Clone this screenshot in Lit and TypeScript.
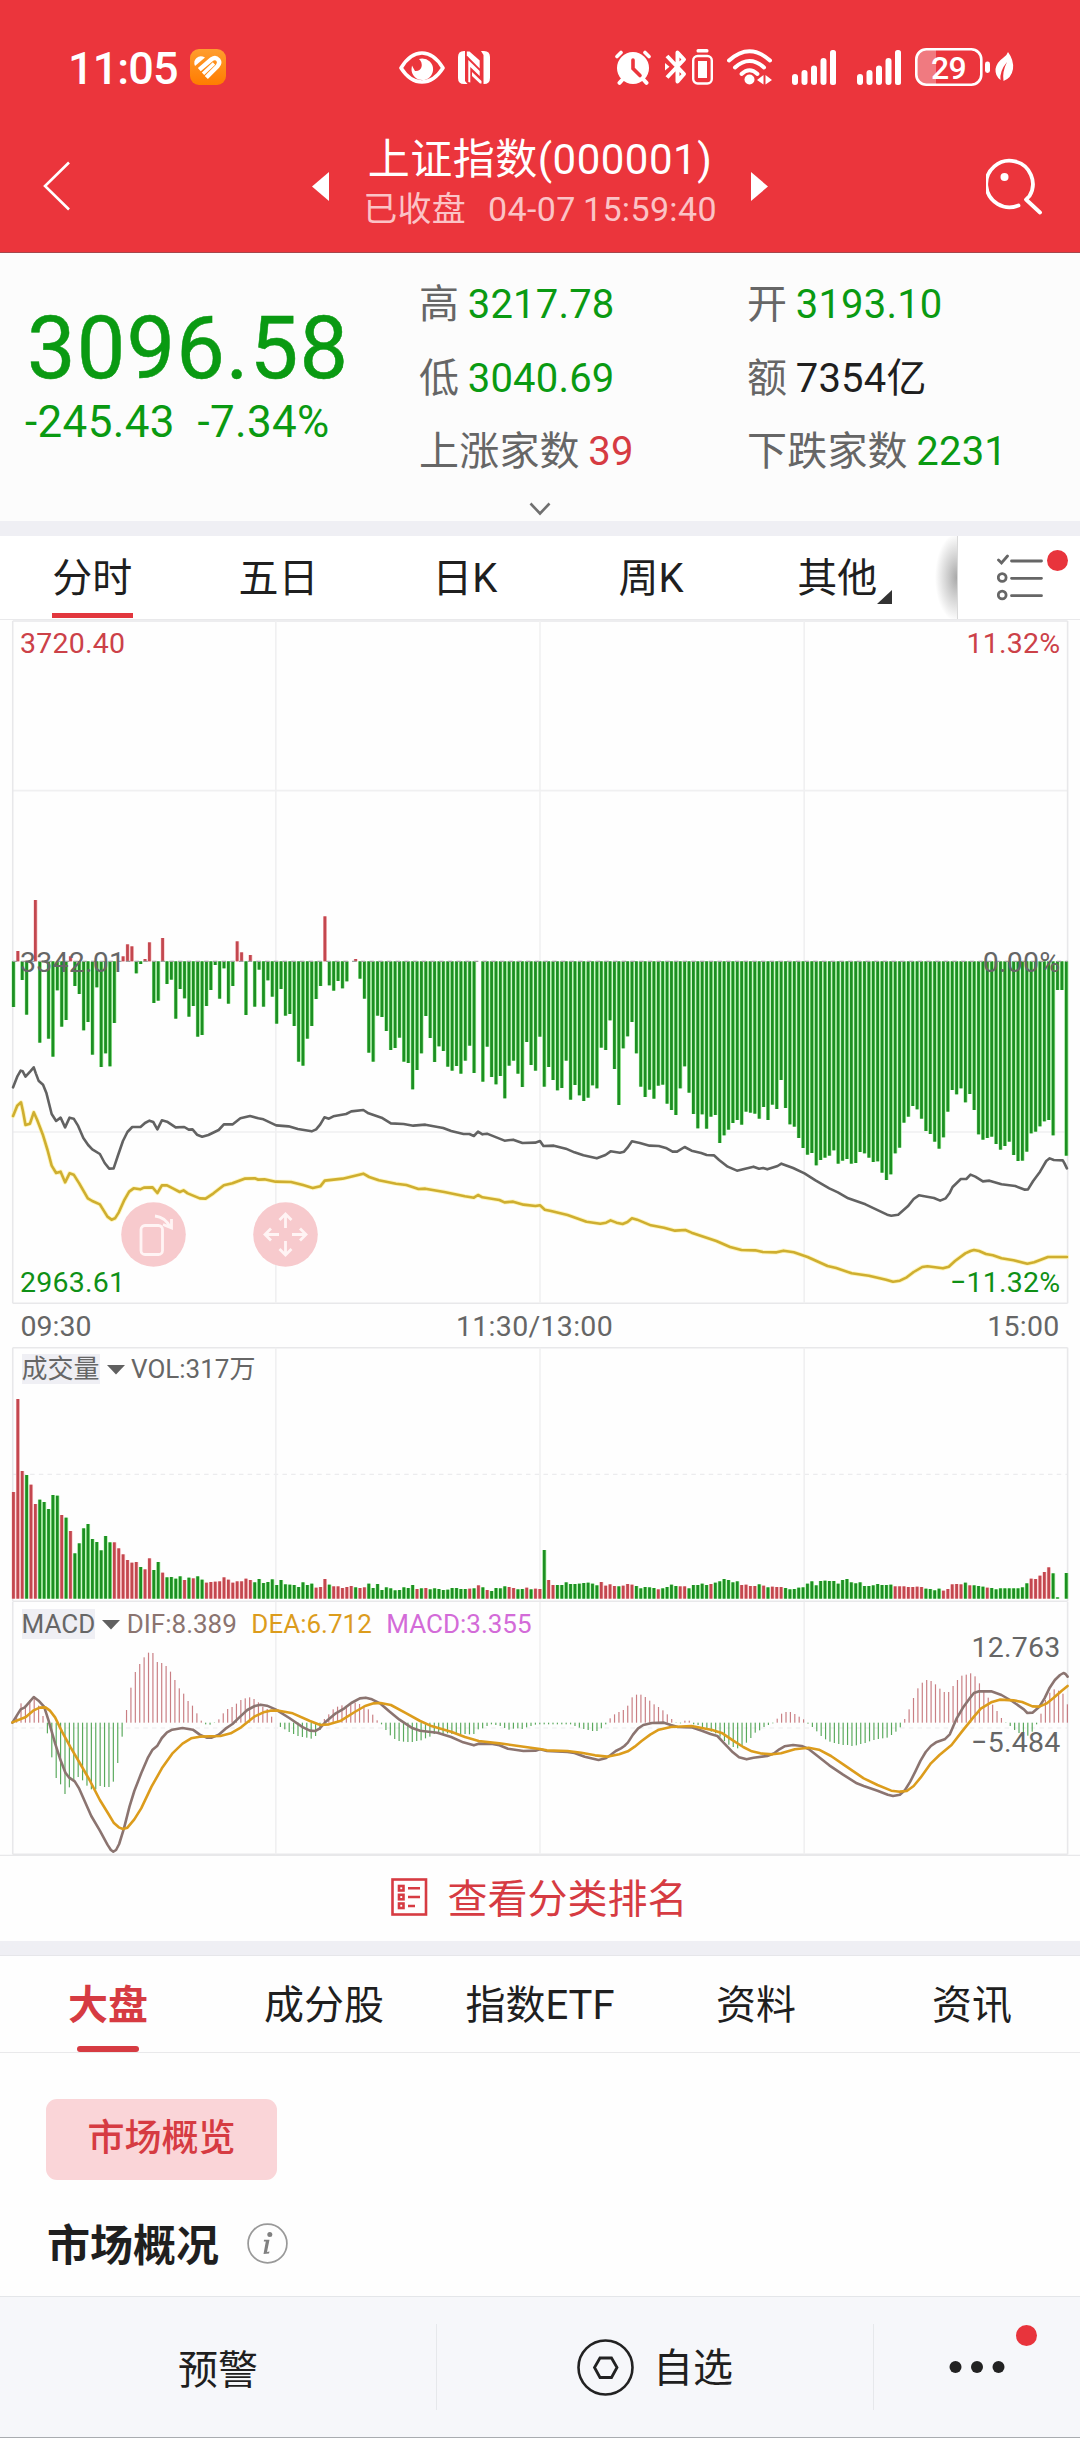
import { LitElement, html, svg, css } from "lit";
import { customElement, property } from "lit/decorators.js";

/* ---------- chart series (drawing units: 3136 wide, 3 per px high) ---------- */

const GAP = -1;

// Minute momentum bars around a zero line at 304; smaller values rise above it.
const MOMENTUM = [
  441,273,360,464,304,120,548,304,536,590,391,500,480,289,378,402,511,486,584,382,
  621,580,619,489,304,289,253,259,340,312,297,247,429,422,234,372,359,476,387,415,
  470,438,530,525,438,390,315,416,325,431,378,244,277,465,285,440,329,440,361,410,
  491,387,467,462,498,605,617,536,498,417,378,169,376,392,363,385,364,304,297,356,
  416,578,605,467,471,513,570,564,533,605,609,688,630,580,468,534,606,559,573,620,
  632,618,641,602,557,639,304,665,560,651,673,648,715,617,602,641,681,546,615,632,
  530,680,621,660,691,684,602,719,675,706,723,713,676,685,563,570,481,627,735,565,
  529,486,580,680,711,689,716,677,674,731,750,765,685,619,698,762,805,763,806,770,
  765,849,826,809,789,780,794,755,758,761,776,741,780,734,747,660,744,793,800,834,
  864,884,879,916,900,893,887,871,911,902,897,911,909,876,880,893,906,904,938,960,
  943,880,863,788,770,738,748,776,813,822,845,866,832,755,690,703,685,727,702,750,
  823,839,834,830,852,869,858,845,885,903,902,875,820,815,799,784,780,826,390,390,887,
];

// Volume bars: top edge per minute, standing on 926.
const VOLUME = [
  606,327,543,555,584,642,629,636,657,615,617,675,683,723,790,760,715,702,747,756,
  781,738,757,757,775,793,810,818,816,831,838,805,840,816,848,862,861,866,859,870,
  863,865,859,869,878,876,875,874,862,869,878,874,874,866,870,877,867,879,876,868,
  885,870,883,884,885,891,877,885,881,893,891,867,884,889,889,894,891,888,892,894,
  892,881,894,882,900,892,895,901,900,892,894,885,897,895,894,898,895,897,900,899,
  894,894,897,897,896,895,886,892,900,903,894,895,889,891,894,898,897,893,898,896,
  897,780,870,885,885,885,877,882,882,881,879,878,881,886,876,887,883,888,889,887,
  882,884,888,895,891,892,894,898,895,891,884,888,889,889,895,885,885,881,885,882,
  878,874,867,870,877,874,885,884,888,888,883,887,892,890,891,891,894,898,897,893,
  892,881,874,886,873,872,873,873,881,870,867,877,880,877,888,888,886,882,885,885,
  884,889,889,889,891,891,890,891,896,897,901,896,902,897,883,882,883,878,886,886,
  888,890,893,894,898,895,895,895,895,895,892,880,866,867,857,846,832,850,922,GAP,849,
];
const VOLUME_UP = new Set([
  0,1,2,4,5,11,13,23,24,25,26,27,28,30,31,34,39,41,44,45,46,47,48,49,50,51,52,53,54,
  69,70,71,73,74,75,76,77,79,80,92,94,104,106,108,113,114,117,119,120,122,123,134,135,
  136,137,139,140,141,147,152,153,159,166,167,168,169,171,173,174,175,201,202,203,204,
  205,206,207,212,213,214,215,216,218,222,232,233,234,235,236,
]);

// MACD histogram around a zero line at 398.
const HISTOGRAM = [
  398,376,340,345,330,318,347,378,430,502,564,583,612,592,570,561,571,587,598,598,
  588,591,591,575,519,440,360,293,246,222,202,188,189,216,219,228,245,270,295,311,
  333,347,370,392,403,404,399,388,370,357,351,341,330,325,322,327,337,350,357,380,
  398,411,418,426,432,438,441,443,446,438,420,387,373,358,350,346,347,340,338,342,
  347,358,374,391,403,420,436,447,453,455,456,456,453,451,445,440,432,430,432,430,
  432,432,433,432,433,432,418,415,408,403,405,408,414,419,416,415,417,412,408,404,
  403,403,403,403,403,403,403,403,408,413,417,420,423,423,415,403,385,373,366,360,
  347,322,314,314,321,332,343,351,361,373,387,399,400,392,392,403,405,415,420,425,
  430,440,453,464,471,475,468,458,444,428,421,411,405,400,386,371,366,366,372,380,
  388,401,411,424,438,448,455,459,462,465,465,468,466,462,459,454,450,447,445,443,
  435,425,412,387,358,324,295,278,270,273,283,296,306,306,288,270,257,254,250,259,
  280,305,323,344,363,384,399,408,420,429,438,437,425,403,371,330,308,298,302,311,343,
];

const AVERAGE_LINE =
  "38,682 50,650 60,632 66,634 74,650 88,634 98,622 104,640 112,662 125,674 135,700 150,762 163,783 176,773 189,802 202,773 214,776 226,796 242,834 256,855 268,868 290,882 304,909 317,926 330,925 342,888 357,843 370,816 384,801 408,801 421,789 434,782 445,786 457,808 470,781 485,785 510,802 535,801 548,809 559,808 572,824 587,830 605,825 635,810 650,793 676,793 698,775 726,768 750,775 765,778 802,796 838,799 865,807 905,814 918,808 930,793 942,772 955,776 968,769 1005,762 1020,754 1055,750 1070,760 1108,773 1135,790 1172,792 1200,797 1235,794 1287,804 1310,813 1346,822 1363,822 1376,828 1388,815 1401,823 1414,821 1465,842 1490,839 1517,849 1554,848 1568,843 1578,858 1608,857 1643,866 1668,877 1694,886 1733,895 1758,885 1773,874 1800,878 1812,875 1822,863 1835,844 1858,849 1886,857 1913,858 1936,865 1953,875 1966,875 1988,861 2008,872 2036,879 2052,885 2073,886 2088,900 2113,920 2140,932 2188,920 2204,926 2216,924 2228,928 2258,918 2269,911 2303,924 2336,940 2368,961 2408,985 2433,997 2463,1015 2513,1033 2576,1064 2588,1067 2608,1064 2636,1039 2653,1017 2668,1006 2712,1014 2730,1022 2746,1015 2758,998 2766,981 2790,957 2806,957 2818,944 2832,950 2854,964 2873,962 2908,973 2948,978 2976,989 2985,988 3000,963 3020,935 3038,903 3048,895 3060,900 3086,901 3091,910 3098,925";
const PRICE_LINE =
  "38,768 50,737 61,727 67,755 74,795 87,791 98,757 108,780 125,826 138,870 150,917 163,939 176,935 189,967 202,940 214,944 230,970 255,1015 268,1023 290,1033 312,1070 324,1079 334,1075 345,1057 360,1022 375,995 388,985 407,988 418,983 443,982 457,999 470,976 485,976 502,985 522,996 533,991 545,1000 580,1015 597,1016 620,1000 650,976 675,970 710,956 740,955 750,959 768,958 800,965 845,966 880,975 908,984 930,979 943,962 995,956 1055,941 1072,951 1100,961 1150,971 1180,975 1215,987 1235,986 1290,996 1350,1009 1376,1013 1388,1005 1401,1012 1450,1020 1465,1027 1490,1025 1520,1034 1555,1038 1568,1036 1582,1049 1600,1053 1648,1065 1703,1085 1743,1091 1760,1088 1773,1081 1790,1088 1808,1092 1822,1086 1835,1075 1850,1079 1890,1096 1928,1103 1960,1112 1990,1110 2008,1118 2080,1143 2120,1161 2153,1170 2193,1171 2215,1176 2255,1177 2275,1172 2305,1177 2345,1191 2403,1218 2428,1224 2473,1240 2523,1247 2573,1259 2593,1265 2613,1262 2633,1252 2653,1236 2678,1221 2693,1219 2738,1225 2755,1220 2773,1203 2803,1180 2818,1173 2828,1170 2843,1173 2863,1182 2883,1186 2908,1195 2943,1201 2983,1211 3003,1207 3043,1191 3098,1191";
const DIF_LINE =
  "36,398 60,358 72,352 98,321 112,332 128,350 140,388 160,460 176,511 190,548 200,562 217,574 230,596 265,678 290,722 312,764 322,780 329,785 337,780 346,762 360,715 376,650 390,603 410,550 430,502 443,479 457,467 470,444 485,427 500,419 530,414 560,419 580,434 600,443 615,443 635,434 655,416 675,402 695,382 718,360 740,348 757,344 775,347 800,358 840,384 880,412 900,422 915,423 928,416 945,396 975,370 1000,355 1020,339 1045,325 1062,323 1080,328 1105,341 1130,364 1160,389 1195,413 1220,422 1270,428 1310,441 1345,457 1376,466 1390,461 1430,462 1450,466 1475,476 1520,483 1555,482 1568,478 1588,483 1648,486 1668,489 1698,500 1738,510 1758,505 1773,495 1788,483 1803,475 1813,468 1823,458 1838,434 1853,415 1868,405 1893,399 1928,398 1948,405 1968,411 2008,412 2038,422 2063,432 2083,438 2103,460 2128,487 2146,502 2168,508 2188,503 2228,498 2248,490 2263,478 2278,469 2303,465 2328,468 2348,477 2373,497 2408,526 2448,554 2488,580 2508,588 2548,602 2578,614 2593,618 2613,614 2628,600 2643,575 2658,544 2673,512 2688,486 2703,468 2718,457 2743,448 2758,433 2778,385 2798,350 2818,322 2828,309 2843,304 2878,304 2908,315 2938,333 2973,358 2983,369 2998,368 3018,350 3033,325 3048,293 3063,270 3078,255 3088,249 3094,252 3100,260";
const DEA_LINE =
  "36,397 75,381 98,361 115,353 132,352 145,362 160,382 180,425 205,472 235,525 260,570 290,630 315,672 330,698 345,712 357,717 370,713 390,688 410,655 440,590 470,535 500,491 530,461 555,445 580,440 640,438 670,430 700,412 740,379 765,367 785,362 810,362 850,370 900,393 930,405 955,403 990,392 1030,366 1060,348 1085,340 1105,339 1135,345 1180,370 1220,393 1250,407 1310,425 1350,441 1390,453 1450,460 1500,467 1568,477 1588,481 1648,483 1688,488 1728,496 1763,500 1798,493 1823,484 1843,470 1863,453 1888,434 1913,419 1948,411 2008,408 2038,414 2068,420 2098,430 2128,451 2158,471 2183,484 2208,490 2243,493 2268,490 2308,478 2348,473 2378,479 2413,498 2458,530 2508,565 2548,585 2588,602 2613,605 2633,603 2653,588 2673,563 2703,520 2728,495 2763,465 2793,425 2828,380 2848,356 2878,337 2903,329 2943,331 2968,336 2998,349 3018,350 3038,341 3058,325 3083,302 3100,288";

/* ---------- chart panel ---------- */

const FRAME_X = [37, 801, 1568, 2335, 3100];

@customElement("chart-panel")
class ChartPanel extends LitElement {
  @property() kind = "price";

  static styles = css`
    :host { display: block; position: relative; }
    svg { display: block; width: 1080px; }
    .price { height: 684px; }
    .volume { height: 255px; }
    .macd { height: 254px; }
    .grid { stroke: #f0f0f1; stroke-width: 1.6; fill: none; vector-effect: non-scaling-stroke; }
    .edge { stroke: #e8e8ea; }
    .dash { stroke-dasharray: 4.5 4.2; stroke-width: 1.2; stroke: #ececee; }
    .zero { stroke: #a0a0a0; stroke-width: 1.2; stroke-dasharray: 4.5 4.2; fill: none; vector-effect: non-scaling-stroke; }
    .line { fill: none; stroke-width: 2.6; stroke-linejoin: round; stroke-linecap: round; vector-effect: non-scaling-stroke; }
    .avg { stroke: #626262; }
    .last { stroke: #cfae30; }
    .dif { stroke: #8b7470; }
    .dea { stroke: #dc9c1c; }
    .glow { stroke: #fff3a0; stroke-width: 4.4; opacity: .7; }
    .g-core { fill: #1c8f22; }
    .g-halo { fill: #a6f0a0; }
    .r-core { fill: #c3474f; }
    .r-halo { fill: #f9c6c8; }
    .up { fill: #b8565c; opacity: .76; }
    .down { fill: #2f9433; opacity: .8; }
  `;

  private bar(i: number, y: number, h: number, up: boolean) {
    const x = 38.6 + i * 12.738;
    return svg`<rect class=${up ? "r-halo" : "g-halo"} x=${x - 5} y=${y} width="11.5" height=${h}/>
      <rect class=${up ? "r-core" : "g-core"} x=${x - 3.6} y=${y} width="8" height=${h}/>`;
  }

  private verticals(top: number, bottom: number) {
    return FRAME_X.map((x, i) => svg`<path class="grid ${i % 4 ? "" : "edge"}" d="M${x} ${top}V${bottom}"/>`);
  }

  private price() {
    return html`<svg class="price" viewBox="0 -720 3136 2052" preserveAspectRatio="none">
      <path class="grid edge" d="M37 -717H3100M37 1330H3100"/>
      <path class="grid" d="M37 -208H3100M37 816H3100"/>
      ${this.verticals(-717, 1330)}
      ${MOMENTUM.map((v, i) => v === 304 ? null : v < 304 ? this.bar(i, v, 304 - v, true) : this.bar(i, 304, v - 304, false))}
      <path class="zero" d="M37 304H3100"/>
      <polyline class="line avg" points=${AVERAGE_LINE}/>
      <polyline class="line glow" points=${PRICE_LINE}/>
      <polyline class="line last" points=${PRICE_LINE}/>
    </svg>`;
  }

  private volume() {
    return html`<svg class="volume" viewBox="0 171 3136 765" preserveAspectRatio="none">
      <path class="grid edge" d="M37 173H3100M37 934H3100"/>
      <path class="grid dash" d="M37 553H3100"/>
      ${this.verticals(173, 934)}
      ${VOLUME.map((v, i) => v === GAP ? null : this.bar(i, v, 926 - v, VOLUME_UP.has(i)))}
    </svg>`;
  }

  private macd() {
    return html`<svg class="macd" viewBox="0 36 3136 762" preserveAspectRatio="none">
      <path class="grid edge" d="M37 793H3100"/>
      <path class="grid edge" d="M0 797H3136"/>
      <path class="grid dash" d="M37 414H3100"/>
      ${this.verticals(36, 793)}
      ${HISTOGRAM.map((v, i) => {
        const x = 33.8 + i * 12.766;
        return v < 398
          ? svg`<rect class="up" x=${x} y=${v} width="3.4" height=${398 - v}/>`
          : svg`<rect class="down" x=${x} y="398" width="3.4" height=${v - 398}/>`;
      })}
      <polyline class="line dif" points=${DIF_LINE}/>
      <polyline class="line dea" points=${DEA_LINE}/>
    </svg>`;
  }

  render() {
    const body = this.kind === "price" ? this.price() : this.kind === "volume" ? this.volume() : this.macd();
    return html`${body}<slot></slot>`;
  }
}

/* ---------- status bar ---------- */

const signal = html`<svg width="44" height="35" viewBox="0 0 44 35" fill="#fff">
  <rect x="0" y="24" width="6" height="11" rx="3"/><rect x="9.5" y="20" width="6" height="15" rx="3"/>
  <rect x="19" y="15.5" width="6" height="19.5" rx="3"/><rect x="28.5" y="8" width="6" height="27" rx="3"/>
  <rect x="38" y="0" width="6" height="35" rx="2.5"/></svg>`;

@customElement("status-bar")
class StatusBar extends LitElement {
  static styles = css`
    :host { display: flex; height: 134px; box-sizing: border-box; color: #fff; padding-left: 68px; align-items: center; font-family: Roboto, sans-serif; }
    svg { display: block; flex: none; }
    .time { font-size: 45px; font-weight: 500; width: 121.500px; line-height: 1; letter-spacing: -.9px; white-space: nowrap; padding-top: 2px; }
    .mid { display: flex; gap: 13px; margin-left: 173.500px; }
    .right { display: flex; align-items: center; margin-left: 124.500px; }
    .bt { margin-left: 14px; } .bud { margin-left: 4px; } .wifi { margin-left: 14px; }
    .sig { margin-left: 20.500px; } .batt { margin-left: 14px; } .leaf { margin-left: 5px; }
    text { font: 500 32px Roboto, sans-serif; letter-spacing: -.6px; }
  `;
  render() {
    return html`
      <div class="time">11:05</div>
      <svg width="36" height="36" viewBox="0 0 36 36">
        <defs><linearGradient id="o" x2="0" y2="1"><stop stop-color="#ff9d2e"/><stop offset="1" stop-color="#ff7c00"/></linearGradient></defs>
        <rect width="36" height="36" rx="9" fill="url(#o)"/>
        <path d="M5 17Q3 12 6.500 9Q10 6 15 8.500Z" fill="#fff"/>
        <path d="M9.300 20.700L21.500 10.300Q25.500 7.500 28.300 10.800Q30.500 14 27.500 17.200L16.300 28.500" fill="none" stroke="#fff" stroke-width="4.400"/>
        <path d="M13 24.800L24 14.500" stroke="#fff" stroke-width="3.400"/>
      </svg>
      <div class="mid">
        <svg width="46" height="33" viewBox="0 0 46 33">
          <path d="M2 17Q11 2 23 2T44 17Q35 31 23 31T2 17Z" fill="none" stroke="#fff" stroke-width="3.600" stroke-linejoin="round"/>
          <path d="M23 7.500A10.800 10.800 0 1 1 12.500 18L13 14.500Q14.500 17.500 16 20Q21 20.500 22.500 16Q23.500 11 20 8Z" fill="#fff"/>
        </svg>
        <svg width="32" height="33" viewBox="0 0 32 33">
          <path d="M6 0H7V30L9.500 33H6Q0 33 0 27V6Q0 0 6 0ZM23 0H26Q32 0 32 6V27Q32 33 26 33H25.500V4Z" fill="#fff"/>
          <path d="M8.800 .5H11.500L21.700 9.500V17.500L8.800 4.500Z" fill="#fff"/>
          <path d="M10.300 9L21.700 20V25L12.300 16V31.500L10.300 31Z" fill="#fff"/>
          <path d="M14 21L23.500 30V32.500H22L14 25Z" fill="#fff"/>
        </svg>
      </div>
      <div class="right">
        <svg width="36" height="35" viewBox="0 0 36 35">
          <circle cx="18" cy="18" r="16" fill="#fff"/>
          <path d="M18 10V18.500L25 25.500" stroke="#eb353c" stroke-width="3.600" fill="none" stroke-linecap="round"/>
          <path d="M2 6.500L6 2.500M34 6.500L30 2.500" stroke="#fff" stroke-width="3.600" stroke-linecap="round"/>
          <path d="M8 29L4.500 32.800M28 29L31.500 32.800" stroke="#fff" stroke-width="4" stroke-linecap="round"/>
        </svg>
        <svg class="bt" width="23" height="36" viewBox="0 0 23 36">
          <path d="M2 7L19 25L12.500 32.500V3.500L19 10.500L2 28.500" fill="none" stroke="#fff" stroke-width="4" stroke-linejoin="round"/>
          <path d="M0 14L4.500 17.800L0 21.500Z" fill="#fff"/>
        </svg>
        <svg class="bud" width="21" height="36" viewBox="0 0 21 36">
          <rect x="4.500" y="0" width="12" height="3.600" rx="1.500" fill="#fff"/>
          <rect x="1.200" y="7" width="18.600" height="27.500" rx="4.500" fill="none" stroke="#fff" stroke-width="2.400"/>
          <rect x="6" y="12" width="9" height="17" fill="#fff"/>
        </svg>
        <svg class="wifi" width="45" height="36" viewBox="0 0 45 36">
          <g fill="none" stroke="#fff" stroke-width="4" stroke-linecap="round"><path d="M2 11.500Q22.500 -7 43 11.500"/><path d="M8 18.500Q22.500 5.500 37 18.500"/><path d="M14.500 25Q22.500 17.500 30.500 25"/></g>
          <circle cx="22.500" cy="30.500" r="5" fill="#fff"/>
          <path d="M30 31L36.500 26V35.500ZM45 31L38.500 26V35.500Z" fill="#fff"/>
        </svg>
        <div class="sig">${signal}</div><div class="sig">${signal}</div>
        <svg class="batt" width="75" height="38" viewBox="0 0 75 38">
          <path d="M11 1.500H21V36.500H11Q2 36.500 2 27V11Q2 1.500 11 1.500Z" fill="#f07a80"/>
          <rect x="1.300" y="1.300" width="65" height="35.400" rx="10" fill="none" stroke="#fff" stroke-width="2.600"/>
          <rect x="70" y="13.500" width="5" height="11.500" rx="2.400" fill="#fff"/>
          <text x="33.500" y="30.500" text-anchor="middle" fill="#fff">29</text>
        </svg>
        <svg class="leaf" width="19" height="30" viewBox="0 0 19 30">
          <path d="M13 0Q19 8 18 17Q16.500 26 8.500 29Q7 20 12 10Q4.500 19 5.500 28Q0 24 .5 17Q2 10 8 6Q12 3.500 13 0Z" fill="#fff"/>
        </svg>
      </div>`;
  }
}

/* ---------- page ---------- */

const QUOTES = [
  ["高", "3217.78", "down"], ["开", "3193.10", "down"],
  ["低", "3040.69", "down"], ["额", "7354亿", "plain"],
  ["上涨家数", "39", "up"], ["下跌家数", "2231", "down"],
];
const PERIODS = ["分时", "五日", "日K", "周K", "其他"];
const SECTIONS = ["大盘", "成分股", "指数ETF", "资料", "资讯"];

@customElement("app-root")
class AppRoot extends LitElement {
  static styles = css`
    :host { display: block; width: 1080px; height: 2438px; overflow: hidden; background: #fefefe; color: #1f1f1f; font-family: Roboto, "Noto Sans CJK SC", sans-serif; }
    * { box-sizing: border-box; }
    svg { display: block; flex: none; }
    .head { height: 253px; background: #eb353c; color: #fff; border-bottom: 1.500px solid #a5474c; }
    .nav { display: grid; grid-template-columns: 300px 480px 300px; height: 104px; }
    .side { display: flex; align-items: center; height: 104px; }
    .back { margin-left: 43px; }
    .prev { margin-left: auto; margin-right: -29px; }
    .next { margin-left: -29px; } .find { margin-left: auto; margin-right: 37px; }
    .title { text-align: center; padding-top: 3px; }
    .name { font-size: 42px; line-height: 46px; letter-spacing: .5px; }
    .when { font-size: 34px; line-height: 52px; color: #fbc3c6; white-space: pre; letter-spacing: .35px; word-spacing: -1.500px; }
    .summary { display: grid; grid-template-columns: 420px 660px; height: 268px; background: #fcfcfc; grid-template-rows: 249px 19px; }
    .down { color: #0a9a12; } .up { color: #d63b42; } .plain { color: #1f1f1f; }
    .now { padding: 53px 0 0 27px; }
    .big { font-size: 86.500px; line-height: 86px; letter-spacing: 1.100px; -webkit-text-stroke: .5px #0a9a12; }
    .delta { font-size: 44px; line-height: 46px; margin: 7px 0 0 -2px; white-space: pre; letter-spacing: .35px; }
    .quotes { display: grid; grid-template-columns: 328px 332px; grid-auto-rows: 73.500px; padding-top: 15px; }
    .quote { font-size: 40px; line-height: 73px; display: flex; gap: 8.500px; color: #666; white-space: nowrap; margin-left: -1px; letter-spacing: .2px; }
    .more { grid-column: 1 / 3; display: flex; justify-content: center; align-items: flex-start; }
    .band { height: 15px; background: #efeff4; }
    .periods { display: flex; height: 84px; background: #fff; border-bottom: 1.500px solid #e9e9eb; }
    .period { width: 186.300px; text-align: center; font-size: 40px; line-height: 85px; position: relative; padding-right: 2px; }
    .period.on::after { content: ""; position: absolute; left: 52px; width: 81px; bottom: 1px; height: 5px; background: #e2373e; }
    .corner { position: absolute; left: 132px; top: 54px; }
    .shade { width: 27px; background: radial-gradient(ellipse 22px 44px at 100% 50%, #a8a8a8, #d0d0d0 45%, #ffffff00 100%); border-right: 1px solid #d9d9d9; }
    .tools { flex: 1; position: relative; }
    .list { margin: 17px 0 0 39px; }
    .dot { position: absolute; width: 21px; height: 21px; border-radius: 50%; background: #e8343c; }
    .tools .dot { left: 88.500px; top: 14px; }
    .tag { position: absolute; font-size: 28.500px; line-height: 34px; color: #666; letter-spacing: .25px; }
    .l { left: 20px; } .r { right: 19.500px; }
    .y1 { top: 6.500px; } .y2 { top: 326px; } .y3 { top: 646px; }
    .up.tag { color: #cc4148; } .down.tag { color: #0f9016; }
    .round { position: absolute; top: 582px; }
    .one { left: 121px; } .two { left: 253px; }
    .axis { height: 43px; padding: 0 20.500px; display: grid; grid-template-columns: 1fr 1fr 1fr; font-size: 28.500px; line-height: 46px; color: #666; }
    .axis span:nth-child(2) { text-align: center; padding-right: 11px; letter-spacing: .3px; } .axis span:nth-child(3) { text-align: right; letter-spacing: .25px; }
    .legend { position: absolute; left: 21.500px; top: 7px; display: flex; align-items: center; font-size: 26px; line-height: 30px; color: #666; white-space: nowrap; }
    .pick { background: #efeff4; }
    .tri { margin: 0 6.500px 0 7px; }
    .dif { color: #8b7470; } .dea { color: #dc9c1c; margin-left: 14.500px; } .mac { color: #d36bd8; margin-left: 14.500px; }
    .y4 { top: 29px; } .y5 { top: 124px; }
    .rank { height: 85px; display: flex; justify-content: center; align-items: center; gap: 20px; color: #d63b42; font-size: 40px; padding: 0 2px 5px 0; }
    .rank svg { margin-top: 1px; }
    .band.two-line { border-bottom: 1.500px solid #e6e6ea; }
    .sections { height: 97px; display: grid; grid-template-columns: repeat(5, 1fr); border-bottom: 1.500px solid #e9e9eb; }
    .section { text-align: center; font-size: 40px; line-height: 99px; position: relative; }
    .section.on { font-weight: 700; color: #d63b42; }
    .section.on::after { content: ""; position: absolute; left: 77px; width: 62px; bottom: 3px; height: 6px; border-radius: 3px; background: #d63b42; }
    .market { height: 243px; padding: 46px; }
    .chip { width: 231px; height: 81px; border-radius: 11px; background: #fad5d8; color: #d63b42; font-size: 37px; line-height: 80px; text-align: center; font-weight: 500; }
    .heading { display: flex; align-items: center; gap: 28px; font-size: 43px; font-weight: 700; line-height: 50px; margin: 41px 0 0 1px; }
    .heading svg { margin-top: -5px; }
    .foot { height: 142px; background: #f6f7fa; border-top: 1.500px solid #e4e6e9; border-bottom: 1.500px solid #a9acb0; display: grid; grid-template-columns: 437px 437px 206px; padding: 27px 0; font-size: 40px; }
    .cell { display: flex; align-items: center; justify-content: center; position: relative; height: 86px; border-right: 1px solid #e6e8eb; gap: 19px; }
    .cell:last-child { border: 0; }
    .cell span { padding-bottom: 4px; }
    .cell span.low { padding-bottom: 1px; }
    .cell .dot { left: 142px; top: 1px; }
  `;

  private caret() {
    return html`<svg class="tri" width="18" height="11" viewBox="0 0 18 11"><path d="M0 1H18L9 10.500Z" fill="#606060"/></svg>`;
  }

  render() {
    return html`
      <header class="head">
        <status-bar></status-bar>
        <div class="nav">
          <div class="side">
            <svg class="back" width="28" height="50" viewBox="0 0 28 50"><path d="M26 1.500L2 25L26 48.500" fill="none" stroke="#fff" stroke-width="2.600"/></svg>
            <svg class="prev" width="17" height="29" viewBox="0 0 17 29"><path d="M17 0V29L0 14.500Z" fill="#fff"/></svg>
          </div>
          <div class="title">
            <div class="name">上证指数(000001)</div>
            <div class="when">已收盘   04-07 15:59:40</div>
          </div>
          <div class="side">
            <svg class="next" width="17" height="29" viewBox="0 0 17 29"><path d="M0 0V29L17 14.500Z" fill="#fff"/></svg>
            <svg class="find" width="57" height="57" viewBox="0 0 57 57"><path d="M32.500 47.500A23.300 23.300 0 1 1 43.500 38L40 41.500L54 54.500" fill="none" stroke="#fff" stroke-width="3.800" stroke-linecap="round" stroke-linejoin="round"/><circle cx="18.500" cy="19" r="4" fill="#fff"/></svg>
          </div>
        </div>
      </header>

      <section class="summary">
        <div class="now down">
          <div class="big">3096.58</div>
          <div class="delta">-245.43  -7.34%</div>
        </div>
        <div class="quotes">
          ${QUOTES.map(([k, v, c]) => html`<div class="quote"><span>${k}</span><span class=${c}>${v}</span></div>`)}
        </div>
        <div class="more"><svg width="22" height="14" viewBox="0 0 22 14"><path d="M1.500 1.500L11 11.500L20.500 1.500" fill="none" stroke="#707070" stroke-width="2.600"/></svg></div>
      </section>
      <div class="band"></div>

      <nav class="periods">
        ${PERIODS.map((p, i) => html`<div class="period ${i ? "" : "on"}">${p}${i === 4 ? html`<svg class="corner" width="15" height="14" viewBox="0 0 15 14"><path d="M15 0V14H0Z" fill="#333"/></svg>` : null}</div>`)}
        <div class="shade"></div>
        <div class="tools">
          <svg class="list" width="46" height="48" viewBox="0 0 46 48" fill="none" stroke="#666" stroke-width="2.800" stroke-linecap="round">
            <path d="M1.500 7L4.500 10L10.500 3M14.500 8H44.500M14.500 25.300H44.500M14.500 42.700H44.500"/>
            <circle cx="5.200" cy="24.500" r="3.900"/><circle cx="5.200" cy="42" r="3.900"/>
          </svg>
          <div class="dot"></div>
        </div>
      </nav>

      <chart-panel kind="price">
        <div class="tag up l y1">3720.40</div><div class="tag up r y1">11.32%</div>
        <div class="tag l y2">3342.01</div><div class="tag r y2">0.00%</div>
        <div class="tag down l y3">2963.61</div><div class="tag down r y3">−11.32%</div>
        <svg class="round one" width="65" height="65" viewBox="0 0 65 65"><circle cx="32.500" cy="32.500" r="32.300" fill="#f7cacd"/><g fill="none" stroke="#fff4f4" stroke-width="2.800"><rect x="20" y="23.500" width="21.500" height="29" rx="4"/><path d="M34 14Q44 15 49 25M50.500 17V26L42 22.500"/></g></svg>
        <svg class="round two" width="65" height="65" viewBox="0 0 65 65"><circle cx="32.500" cy="32.500" r="32.300" fill="#f7cacd"/><path d="M32.500 26V12M26.500 18L32.500 12L38.500 18M32.500 39V53M26.500 47L32.500 53L38.500 47M26 32.500H12M18 26.500L12 32.500L18 38.500M39 32.500H53M47 26.500L53 32.500L47 38.500" fill="none" stroke="#fff4f4" stroke-width="2.800"/></svg>
      </chart-panel>
      <div class="axis"><span>09:30</span><span>11:30/13:00</span><span>15:00</span></div>
      <chart-panel kind="volume">
        <div class="legend"><span class="pick">成交量</span>${this.caret()}<span>VOL:317万</span></div>
      </chart-panel>
      <chart-panel kind="macd">
        <div class="legend"><span class="pick">MACD</span>${this.caret()}<span class="dif">DIF:8.389</span><span class="dea">DEA:6.712</span><span class="mac">MACD:3.355</span></div>
        <div class="tag r y4">12.763</div><div class="tag r y5">−5.484</div>
      </chart-panel>

      <div class="rank">
        <svg width="37" height="38" viewBox="0 0 37 38" fill="none" stroke="#d63b42" stroke-width="2.600"><rect x="1.500" y="1.500" width="33.500" height="35"/><rect x="8" y="8" width="4.500" height="4.500"/><rect x="8" y="16.800" width="4.500" height="4.500"/><rect x="8" y="25.500" width="4.500" height="4.500"/><path d="M17 10.300H29M17 19H29M17 28H24"/></svg>
        <span>查看分类排名</span>
      </div>
      <div class="band two-line"></div>

      <nav class="sections">
        ${SECTIONS.map((s, i) => html`<div class="section ${i ? "" : "on"}">${s}</div>`)}
      </nav>

      <section class="market">
        <div class="chip">市场概览</div>
        <div class="heading"><span>市场概况</span>
          <svg width="41" height="41" viewBox="0 0 41 41"><circle cx="20.500" cy="20.500" r="19.400" fill="none" stroke="#999" stroke-width="1.700"/><path d="M17 16.800H22.500L20 29L22.500 28.500L22 30.500L16.500 31L18.800 18.500H16.800Z" fill="#808080"/><circle cx="22.800" cy="11.500" r="2.500" fill="#808080"/></svg>
        </div>
      </section>

      <footer class="foot">
        <div class="cell"><span class="low">预警</span></div>
        <div class="cell"><svg width="57" height="57" viewBox="0 0 57 57" fill="none" stroke="#222"><circle cx="28.500" cy="28.500" r="27" stroke-width="2.600"/><path d="M23 19H34.500L40 28.500L34.500 38.500H23L17.500 28.500Z" stroke-width="2.800"/></svg><span>自选</span></div>
        <div class="cell"><svg width="56" height="14" viewBox="0 0 56 14" fill="#222"><circle cx="6.500" cy="7" r="6"/><circle cx="28" cy="7" r="6"/><circle cx="49.500" cy="7" r="6"/></svg><div class="dot"></div></div>
      </footer>`;
  }
}
